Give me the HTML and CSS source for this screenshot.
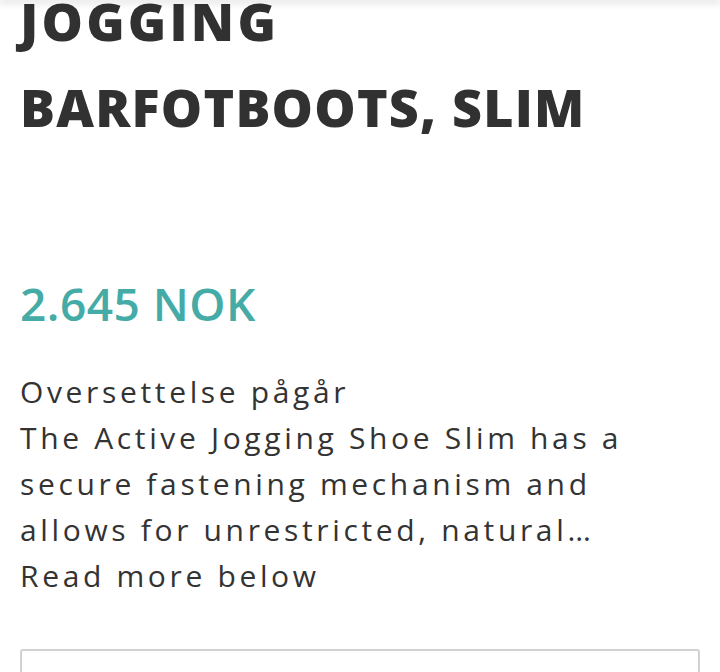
FILE: index.html
```html
<!DOCTYPE html>
<html lang="no">
<head>
<meta charset="utf-8">
<link rel="stylesheet" href="styles.css">
</head>
<body>
<div class="topbar"></div>
<main class="product">
  <h1 class="title"><span class="title-first">JOGGING</span><br>BARFOTBOOTS, SLIM</h1>
  <p class="price">2.645 NOK</p>
  <div class="desc">
    <p>Oversettelse pågår</p>
    <p>The Active Jogging Shoe Slim has a<br>secure fastening mechanism and<br>allows for unrestricted, natural…</p>
    <p>Read more below</p>
  </div>
  <div class="box"></div>
</main>
</body>
</html>
```
FILE: styles.css
```css
html, body {
  margin: 0;
  padding: 0;
  background: #fff;
  overflow: hidden;
}
body {
  font-family: "Open Sans", "DejaVu Sans", sans-serif;
  color: #333;
}
.topbar {
  height: 0;
  box-shadow: 0 0 8px 2px rgba(0, 0, 0, 0.18);
  position: relative;
  z-index: 2;
}
.product {
  padding: 0 20px;
}
.title {
  margin: -22px 0 0;
  font-size: 52px;
  line-height: 86px;
  font-weight: 800;
  letter-spacing: 1.2px;
  color: #313131;
}
.title-first {
  letter-spacing: 3.2px;
}
.price {
  margin: 123px 0 0;
  font-size: 46px;
  line-height: 60px;
  font-weight: 600;
  letter-spacing: 0.5px;
  color: #45aba6;
}
.desc {
  margin-top: 36px;
  font-size: 30px;
  line-height: 46px;
  letter-spacing: 3.65px;
  color: #333;
  white-space: nowrap;
}
.desc p {
  margin: 0;
}
.box {
  margin-top: 50px;
  height: 60px;
  border: 2px solid #d2d2d2;
  border-radius: 3px;
}
```
